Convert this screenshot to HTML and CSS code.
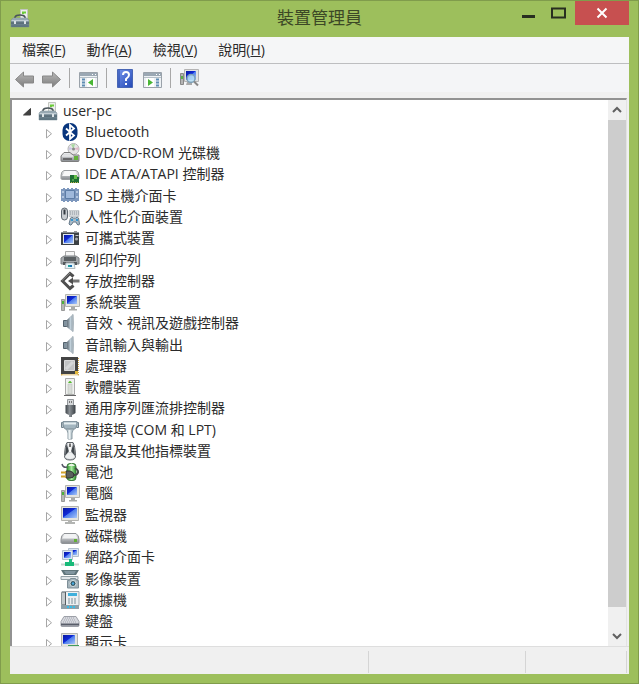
FILE: index.html
```
<!DOCTYPE html>
<html lang="zh-Hant">
<head>
<meta charset="utf-8">
<meta name="viewport" content="width=device-width, initial-scale=1">
<title>裝置管理員</title>
<link rel="stylesheet" href="styles.css">
</head>
<body>
<svg class="sprite" aria-hidden="true">
  <defs>
    <linearGradient id="metal" x1="0" y1="0" x2="0" y2="1"><stop offset="0" stop-color="#f4f5f6"/><stop offset="1" stop-color="#85898e"/></linearGradient>
    <linearGradient id="steel" x1="0" y1="0" x2="0" y2="1"><stop offset="0" stop-color="#a4b4bd"/><stop offset="1" stop-color="#536b78"/></linearGradient>
    <linearGradient id="screen" x1="0" y1="0" x2="1" y2="1"><stop offset="0" stop-color="#0719a0"/><stop offset=".45" stop-color="#1029d8"/><stop offset=".5" stop-color="#4d7cec"/><stop offset="1" stop-color="#a9c8fa"/></linearGradient>
    <linearGradient id="arrow" x1="0" y1="0" x2="0" y2="1"><stop offset="0" stop-color="#b9b9b9"/><stop offset="1" stop-color="#7c7c7c"/></linearGradient>
    <linearGradient id="help" x1="0" y1="0" x2="1" y2="1"><stop offset="0" stop-color="#7595ed"/><stop offset="1" stop-color="#2348b5"/></linearGradient>
    <linearGradient id="cone" x1="0" y1="0" x2="1" y2="0"><stop offset="0" stop-color="#56636d"/><stop offset=".6" stop-color="#c3d2dc"/><stop offset="1" stop-color="#82919b"/></linearGradient>
    <linearGradient id="cell" x1="0" y1="0" x2="1" y2="0"><stop offset="0" stop-color="#2d8f2d"/><stop offset=".5" stop-color="#a9eba0"/><stop offset="1" stop-color="#278a2a"/></linearGradient>
    <linearGradient id="plug" x1="0" y1="0" x2="1" y2="0"><stop offset="0" stop-color="#3f454a"/><stop offset=".4" stop-color="#8a9095"/><stop offset="1" stop-color="#3a4045"/></linearGradient>
  </defs>
  <symbol id="open" viewBox="0 0 10 16"><path d="M8.500 5.500v6.500H1.500z" fill="#404040" stroke="#404040"/></symbol>
  <symbol id="closed" viewBox="0 0 10 16"><path d="M2.500 5.500v8.500l5-4.250z" fill="#fff" stroke="#a6a6a6"/></symbol>
  <symbol id="toolbox" viewBox="0 0 20 20">
    <path d="M10.500 1.500h7v10h-7z" fill="#eef0ec" stroke="#c2c6c0"/><path d="M13 6V4.500h3" fill="none" stroke="#6ccc3a" stroke-width="2"/>
    <path d="M5 11V9q1-2 5-2t5 2v2" fill="none" stroke="#4a545a" stroke-width="1.500"/>
    <path d="M1 12l2-2h14l2 2v7H1z" fill="url(#steel)" stroke="#7a8c96" stroke-width=".5"/><path d="M1.500 12.500h17" stroke="#c0ccd3"/><path d="M1 15h18" stroke="#465b67"/><path d="M4 13h2v3H4zM14 13h2v3h-2z" fill="#dce3e6"/>
  </symbol>
  <symbol id="bluetooth" viewBox="0 0 20 20"><rect x="2.500" y="1" width="15" height="18" rx="7" fill="#08357d"/><path d="M6 6.500l8 7-4 3.500v-14l4 3.500-8 7" fill="none" stroke="#fff" stroke-width="1.800"/></symbol>
  <symbol id="dvd" viewBox="0 0 20 20"><circle cx="13.500" cy="6" r="5.500" fill="#e6e6e6" stroke="#b4b4b4"/><path d="M13.500 6L11 1.500l4-.5z" fill="#a9d9a0"/><path d="M13.500 6l5-2v3z" fill="#e2b7ca"/><path d="M13.500 6l-5 1 1-3z" fill="#c9c6e3"/><circle cx="13.500" cy="6" r="1.500" fill="#8a8a8a"/><path d="M4 9.500h6l3 2.500h6v5.500q0 1-1 1H2q-1 0-1-1V13z" fill="url(#metal)" stroke="#7d7d7d"/><path d="M2 13h11" stroke="#f4f4f4"/><path d="M3 16h9" stroke="#555" stroke-width="1.500"/><path d="M14 13h4v4h-4z" fill="#65b23b"/></symbol>
  <symbol id="ide" viewBox="0 0 20 20"><path d="M4 6.500h12q3 1 3 5v3q0 1-2 1H3q-2 0-2-1v-3q0-4 3-5z" fill="url(#metal)" stroke="#9a9da0"/><path d="M5 7h10l3 5H2z" fill="#f7f7f8"/><path d="M10 11h4v2h5v6h-9z" fill="#1f7034"/><path d="M14 11h3v4h-3z" fill="#63bd48"/><path d="M12 15h2v2h-2z" fill="#4fa04b"/><path d="M11 18.500h8" stroke="#c3b350" stroke-dasharray="1 1"/></symbol>
  <symbol id="sd" viewBox="0 0 20 20"><path d="M1 3h2V2h2v1h2V2h2v1h2V2h2v1h2V2h2v1h2v12h-2v1h-2v-1h-2v1h-2v-1H9v1H7v-1H5v1H3v-1H1z" fill="#7d97bd"/><path d="M5.500 4.500h9v8h-9z" fill="#9fb8db" stroke="#5d7ca6"/><path d="M2 5h2v2H2zM2 10h2v2H2zM16 5h2v2h-2zM16 10h2v2h-2z" fill="#b3c6e0"/></symbol>
  <symbol id="hid" viewBox="0 0 20 20"><path d="M9 3.500h10v6H9z" fill="#d3d7da" stroke="#a8aeb3" stroke-width=".5"/><path d="M10 5h9M10 7h9" stroke="#8d969f" stroke-dasharray="1 1"/><rect x="1.500" y="1" width="6" height="12" rx="3" fill="#c9cdd1" stroke="#5e6770"/><path d="M4.500 2.500v5" stroke="#343b42" stroke-width="2"/><path d="M9 17l1.500-6q1-1.500 3 0h2q2-1.500 3 0L19.500 17q-1.500 3-3.500-2h-3q-2 5-4 2z" fill="#a9bcc9" stroke="#66798a"/><path d="M11 13h2m3 0h2" stroke="#3596cf" stroke-width="2"/></symbol>
  <symbol id="portable" viewBox="0 0 20 20"><path d="M3 3.500h4M14 3.500h3" stroke="#999"/><path d="M1 4h18v13H1z" fill="#3c4145"/><path d="M1 4.500h18" stroke="#888e93"/><path d="M3 6h11v10H3z" fill="#dfe6f0"/><path d="M4 7h9v8H4z" fill="url(#screen)"/><path d="M15.500 7.500h3" stroke="#c7cacc"/><circle cx="16.500" cy="11" r="1.500" fill="#a7aaae"/></symbol>
  <symbol id="printer" viewBox="0 0 20 20"><path d="M5.500 1.500h9v7h-9z" fill="#f6f6f6" stroke="#aaa"/><path d="M1 8l3-2h12l3 2v6H1z" fill="#a4a8ab" stroke="#7d8184"/><path d="M4 7h12v4H4z" fill="#5b6063"/><path d="M3 12h14v3H3z" fill="#54595c"/><path d="M6 13h8l1 5.500H5z" fill="#e4f3f7" stroke="#b5bcc0"/><path d="M8 15h2v2H8z" fill="#229e9f"/><path d="M10 15h2v2h-2z" fill="#1870b0"/></symbol>
  <symbol id="storage" viewBox="0 0 20 20"><path d="M13.500 5.500L10 2.500 2.500 10l7.500 7.500 3.500-3" fill="none" stroke="#4e4e4e" stroke-width="3"/><path d="M2 9.500L10 2" stroke="#8a8a8a"/><path d="M12 10h7.500" stroke="#757575" stroke-width="3"/><path d="M13 6.500v7L8 10z" fill="#4e4e4e"/></symbol>
  <symbol id="computer" viewBox="0 0 20 20"><path d="M5.500 2.500h14v12h-14z" fill="#e4e4e0" stroke="#b4b4b0"/><path d="M7 4h10v8H7z" fill="url(#screen)"/><path d="M11 15h4v2h2v1.500H9V17h2z" fill="#a9aba9"/><path d="M1.500 7.500h3v11h-3z" fill="#b5b7b4" stroke="#999"/><path d="M2 9h2v3H2z" fill="#4db03a"/></symbol>
  <symbol id="speaker" viewBox="0 0 20 20"><path d="M3.500 7.500h4v6h-4z" fill="#82939f" stroke="#54626d"/><path d="M7 7l6-5.500v17L7 14z" fill="url(#cone)" stroke="#94a1aa" stroke-width=".5"/><path d="M12 1.500h1.500q1 8.500 0 17H12z" fill="#aab6be"/></symbol>
  <symbol id="cpu" viewBox="0 0 20 20"><path d="M2 2h16v16.500H2z" fill="none" stroke="#d2a84c" stroke-width="2" stroke-dasharray="1 1"/><path d="M1 1h17v17H1z" fill="#444"/><path d="M4.500 4.500h10v10h-10z" fill="#c2c3c4" stroke="#dadada"/><path d="M6 13l7-7" stroke="#d6d7d8" stroke-width="3"/><path d="M15 15h3v3h-3z" fill="#e3b83b"/></symbol>
  <symbol id="software" viewBox="0 0 20 20"><path d="M5.500 1.500h9v16h-9z" fill="#f0f1ef" stroke="#aaa"/><path d="M8 7h4v10H8z" fill="#d9dcd8" stroke="#b2b8b0" stroke-width=".5"/><path d="M8 6q2-4 4 0z" fill="#54b92f"/><path d="M4 18.500h12" stroke="#666"/></symbol>
  <symbol id="usb" viewBox="0 0 20 20"><path d="M7.500 1.500h6v6h-6z" fill="#d5d8da" stroke="#94989c"/><path d="M9 3h1v2H9zM11 3h1v2h-1z" fill="#777"/><path d="M5.500 7h10v8q-1 1-3.500 2v2H9v-2q-2.500-1-3.500-2z" fill="url(#plug)"/></symbol>
  <symbol id="port" viewBox="0 0 20 20"><path d="M1.500 2.500h2v5h-2zM16.500 2.500h2v5h-2z" fill="#b7c3ca" stroke="#71828c"/><path d="M3 1.500h14V5l-2 4H5L3 5z" fill="#a3b5bf" stroke="#84949e"/><path d="M4 3.500h12" stroke="#e5edef" stroke-width="2"/><path d="M6.500 9h7l-1.500 4v6H8v-6z" fill="#b7c5cc" stroke="#8b9aa2"/><path d="M9.500 10v9" stroke="#edf3f4" stroke-width="2"/></symbol>
  <symbol id="mouse" viewBox="0 0 20 20"><path d="M7 1.500h6q2 3 2.500 13Q16 19 10 19t-5.500-4.500Q5 4.500 7 1.500z" fill="#c5c9cd" stroke="#5d6267"/><path d="M6.500 3L9 10l-4 5zM13.500 3L11 10l4 5z" fill="#40464b"/><path d="M8 2h4l-1 9H9z" fill="#fafafa"/><path d="M10 2.500V6" stroke="#444" stroke-width="1.500"/><path d="M5 16q5-9 10 0-5 4-10 0" fill="#eef0f1"/></symbol>
  <symbol id="battery" viewBox="0 0 20 20"><rect x="7" y="1.500" width="9" height="17" rx="3" fill="url(#cell)" stroke="#3d7d3d"/><path d="M8 4q3.500-5 7 0z" fill="#e9f5e4"/><path d="M2 2q1 4 5 3" fill="none" stroke="#556" stroke-width="1.500"/><path d="M15 6q5 3 2 6-2 2-5 0" fill="none" stroke="#454b49" stroke-width="2"/><path d="M6 9h4q4 1 4 4t-4 3H6z" fill="#5a605d" stroke="#303432"/><path d="M1 10.500h5M1 14.500h5" stroke="#d1a32c" stroke-width="2"/></symbol>
  <symbol id="monitor" viewBox="0 0 20 20"><path d="M1.500 1.500h17v14h-17z" fill="#e4e4df" stroke="#b4b4b0"/><path d="M3 3h14v10H3z" fill="url(#screen)"/><path d="M8 16h4v1h3v2H5v-2h3z" fill="#b3b5b3"/></symbol>
  <symbol id="disk" viewBox="0 0 20 20"><path d="M4 7.500h12q3 2 3 6v3q0 1-2 1H3q-2 0-2-1v-3q0-4 3-6z" fill="url(#metal)" stroke="#909396"/><path d="M5 8h10l3 4.500H2z" fill="#f2f3f4"/><path d="M3 15.500h10" stroke="#9a9da0"/><path d="M14 13h3v3h-3z" fill="#62b035"/></symbol>
  <symbol id="network" viewBox="0 0 20 20"><path d="M8.500 1.500h10v8h-10z" fill="#dbe6f2" stroke="#b3bfcc"/><path d="M10 3h7v5h-7z" fill="url(#screen)"/><path d="M2.500 3.500h10v9h-10z" fill="#dbe6f2" stroke="#b3bfcc"/><path d="M4 5h7v6H4z" fill="url(#screen)"/><path d="M9 12h3v4H9z" fill="#22be83"/><path d="M1 17.500h18" stroke="#c9d3cf" stroke-width="2"/><path d="M5 15h9v4H5z" fill="#18ba79"/></symbol>
  <symbol id="imaging" viewBox="0 0 20 20"><path d="M1 1h18l-3 5H4z" fill="#5f747a"/><path d="M4 2h12l-2 3H6z" fill="#8296a0"/><path d="M1 7.500h17v3H1z" fill="#e0e5e8" stroke="#93a0a6"/><path d="M7.500 11.500h2l1-2h5l1 2h2v7.500h-11z" fill="#a5b4bb" stroke="#7e8f98"/><circle cx="13" cy="14.500" r="3" fill="#33535f" stroke="#dbe6ea"/><circle cx="13" cy="14.500" r="1.200" fill="#4aaee5"/></symbol>
  <symbol id="modem" viewBox="0 0 20 20"><path d="M2 1.500h17v14H2z" fill="#eceff1" stroke="#a3abb0"/><path d="M1.500 2.500h4v12h-4z" fill="#c4cacd" stroke="#8d9599"/><path d="M5.500 2v13" stroke="#555d61"/><path d="M8 3h9v3H8z" fill="#3fb0dc"/><path d="M8 9h9M8 11h9M8 13h9" stroke="#7d909a" stroke-dasharray="2 1"/><path d="M1 15h18v4H1z" fill="#8fa0a9"/><path d="M7 17h8" stroke="#38bbe6" stroke-width="2" stroke-dasharray="2 1"/></symbol>
  <symbol id="keyboard" viewBox="0 0 20 20"><path d="M4 5.500h12l3 5v4q0 1-1 1H2q-1 0-1-1v-4z" fill="#d6d8de" stroke="#9da0a8"/><path d="M5 7h10M4 9h12M3 11h14" stroke="#a3a6af" stroke-dasharray="1 1"/><path d="M1 12.500h18v2H1z" fill="#585d69"/></symbol>
  <symbol id="display" viewBox="0 0 20 20"><path d="M1.500 1.500h16v13h-16z" fill="#e2e3df" stroke="#b4b4b0"/><path d="M3 3h12v9H3z" fill="url(#screen)"/><path d="M8 13h11v5H8z" fill="#429b5b"/><path d="M11 14h4v3h-4z" fill="#d7e7da"/></symbol>
  <symbol id="pane-frame" viewBox="0 0 20 20"><path d="M.5 2.500h18v15H.5z" fill="#edf1f4" stroke="#9aa2aa"/><path d="M1 3h17v3H1z" fill="#9ba8b4"/><path d="M13 4.500h1m2 0h1" stroke="#fff"/><path d="M1 7.500h17" stroke="#b6c0c8"/></symbol>
</svg>

<main class="window">
  <header class="titlebar">
    <svg class="icon app-icon" aria-hidden="true"><use href="#toolbox"/></svg>
    <h1>裝置管理員</h1>
    <div class="window-buttons">
      <button class="minimize" aria-label="最小化"><svg width="14" height="18" aria-hidden="true"><path d="M1 15.500h13" stroke="#282e20" stroke-width="3"/></svg></button>
      <button class="maximize" aria-label="最大化"><svg width="16" height="18" aria-hidden="true"><path d="M1 7.500h13v9H1z" fill="none" stroke="#282e20" stroke-width="2"/></svg></button>
      <button class="close" aria-label="關閉"><svg width="12" height="12" aria-hidden="true"><path d="M1.500 1.500l9 9m0-9l-9 9" stroke="#fff" stroke-width="2"/></svg></button>
    </div>
  </header>

  <div class="client">
    <nav class="menubar">
      <button>檔案(<u>F</u>)</button>
      <button>動作(<u>A</u>)</button>
      <button>檢視(<u>V</u>)</button>
      <button>說明(<u>H</u>)</button>
    </nav>
    <div class="toolbar" role="toolbar" aria-label="工具列">
      <button aria-label="上一頁"><svg class="icon" viewBox="0 0 20 20" aria-hidden="true"><path d="M.5 11.500l8-7.500v4h10v7h-10v4z" fill="url(#arrow)" stroke="#888"/></svg></button>
      <button class="spaced" aria-label="下一頁"><svg class="icon" viewBox="0 0 20 20" aria-hidden="true"><path d="M18.500 11.500l-8-7.500v4h-10v7h10v4z" fill="url(#arrow)" stroke="#888"/></svg></button>
      <span class="separator"></span>
      <button aria-label="顯示主控台樹狀目錄"><svg class="icon" viewBox="0 -2 20 20" aria-hidden="true"><use href="#pane-frame" width="20" height="20"/><path d="M3 9.500h3m-3 3h3m-3 3h3" stroke="#5f8db3" stroke-width="2"/><path d="M8 8h8v9H8z" fill="#fff"/><path d="M14 9v7l-5-3.500z" fill="#49b635"/></svg></button>
      <span class="separator"></span>
      <button aria-label="說明"><svg class="icon" viewBox="0 0 20 20" aria-hidden="true"><path d="M1.500 1.500h15v18h-15z" fill="url(#help)" stroke="#4866b5"/><path d="M3 2v17" stroke="#294ba8"/><path d="M7 7q0-3 3-3t3 3q0 2-3 4v2" fill="none" stroke="#fff" stroke-width="2"/><path d="M9 15h2v2H9z" fill="#fff"/></svg></button>
      <button class="spaced" aria-label="顯示動作窗格"><svg class="icon" viewBox="0 -2 20 20" aria-hidden="true"><use href="#pane-frame" width="20" height="20"/><path d="M13 9.500h3m-3 3h3m-3 3h3" stroke="#5f8db3" stroke-width="2"/><path d="M3 8h8v9H3z" fill="#fff"/><path d="M5 9v7l5-3.500z" fill="#49b635"/></svg></button>
      <span class="separator"></span>
      <button aria-label="掃描硬體變更"><svg class="icon" viewBox="0 0 20 20" aria-hidden="true"><path d="M4.500 1.500h14v12h-14z" fill="#e2e3e3" stroke="#b4b4b4"/><path d="M6 3h10v9H6z" fill="url(#screen)"/><path d="M.5 5.500h3v11h-3z" fill="#b5b5b5" stroke="#888"/><path d="M1 8h2v3H1z" fill="#57af45"/><path d="M7 14h5v3H6z" fill="#aaa"/><circle cx="11" cy="10.500" r="4" fill="#b6e0f7" fill-opacity=".8" stroke="#7da0b8" stroke-width="1.500"/><path d="M14 13.500l4 4" stroke="#888" stroke-width="2"/></svg></button>
    </div>

    <section class="tree-panel" aria-label="裝置">
      <ul class="tree">
        <li class="root"><button aria-label="收合"><svg aria-hidden="true"><use href="#open"/></svg></button><svg class="icon" aria-hidden="true"><use href="#toolbox"/></svg><span>user-pc</span></li>
        <li><button aria-label="展開"><svg aria-hidden="true"><use href="#closed"/></svg></button><svg class="icon" aria-hidden="true"><use href="#bluetooth"/></svg><span>Bluetooth</span></li>
        <li><button aria-label="展開"><svg aria-hidden="true"><use href="#closed"/></svg></button><svg class="icon" aria-hidden="true"><use href="#dvd"/></svg><span>DVD/CD-ROM 光碟機</span></li>
        <li><button aria-label="展開"><svg aria-hidden="true"><use href="#closed"/></svg></button><svg class="icon" aria-hidden="true"><use href="#ide"/></svg><span>IDE ATA/ATAPI 控制器</span></li>
        <li><button aria-label="展開"><svg aria-hidden="true"><use href="#closed"/></svg></button><svg class="icon" aria-hidden="true"><use href="#sd"/></svg><span>SD 主機介面卡</span></li>
        <li><button aria-label="展開"><svg aria-hidden="true"><use href="#closed"/></svg></button><svg class="icon" aria-hidden="true"><use href="#hid"/></svg><span>人性化介面裝置</span></li>
        <li><button aria-label="展開"><svg aria-hidden="true"><use href="#closed"/></svg></button><svg class="icon" aria-hidden="true"><use href="#portable"/></svg><span>可攜式裝置</span></li>
        <li><button aria-label="展開"><svg aria-hidden="true"><use href="#closed"/></svg></button><svg class="icon" aria-hidden="true"><use href="#printer"/></svg><span>列印佇列</span></li>
        <li><button aria-label="展開"><svg aria-hidden="true"><use href="#closed"/></svg></button><svg class="icon" aria-hidden="true"><use href="#storage"/></svg><span>存放控制器</span></li>
        <li><button aria-label="展開"><svg aria-hidden="true"><use href="#closed"/></svg></button><svg class="icon" aria-hidden="true"><use href="#computer"/></svg><span>系統裝置</span></li>
        <li><button aria-label="展開"><svg aria-hidden="true"><use href="#closed"/></svg></button><svg class="icon" aria-hidden="true"><use href="#speaker"/></svg><span>音效、視訊及遊戲控制器</span></li>
        <li><button aria-label="展開"><svg aria-hidden="true"><use href="#closed"/></svg></button><svg class="icon" aria-hidden="true"><use href="#speaker"/></svg><span>音訊輸入與輸出</span></li>
        <li><button aria-label="展開"><svg aria-hidden="true"><use href="#closed"/></svg></button><svg class="icon" aria-hidden="true"><use href="#cpu"/></svg><span>處理器</span></li>
        <li><button aria-label="展開"><svg aria-hidden="true"><use href="#closed"/></svg></button><svg class="icon" aria-hidden="true"><use href="#software"/></svg><span>軟體裝置</span></li>
        <li><button aria-label="展開"><svg aria-hidden="true"><use href="#closed"/></svg></button><svg class="icon" aria-hidden="true"><use href="#usb"/></svg><span>通用序列匯流排控制器</span></li>
        <li><button aria-label="展開"><svg aria-hidden="true"><use href="#closed"/></svg></button><svg class="icon" aria-hidden="true"><use href="#port"/></svg><span>連接埠 (COM 和 LPT)</span></li>
        <li><button aria-label="展開"><svg aria-hidden="true"><use href="#closed"/></svg></button><svg class="icon" aria-hidden="true"><use href="#mouse"/></svg><span>滑鼠及其他指標裝置</span></li>
        <li><button aria-label="展開"><svg aria-hidden="true"><use href="#closed"/></svg></button><svg class="icon" aria-hidden="true"><use href="#battery"/></svg><span>電池</span></li>
        <li><button aria-label="展開"><svg aria-hidden="true"><use href="#closed"/></svg></button><svg class="icon" aria-hidden="true"><use href="#computer"/></svg><span>電腦</span></li>
        <li><button aria-label="展開"><svg aria-hidden="true"><use href="#closed"/></svg></button><svg class="icon" aria-hidden="true"><use href="#monitor"/></svg><span>監視器</span></li>
        <li><button aria-label="展開"><svg aria-hidden="true"><use href="#closed"/></svg></button><svg class="icon" aria-hidden="true"><use href="#disk"/></svg><span>磁碟機</span></li>
        <li><button aria-label="展開"><svg aria-hidden="true"><use href="#closed"/></svg></button><svg class="icon" aria-hidden="true"><use href="#network"/></svg><span>網路介面卡</span></li>
        <li><button aria-label="展開"><svg aria-hidden="true"><use href="#closed"/></svg></button><svg class="icon" aria-hidden="true"><use href="#imaging"/></svg><span>影像裝置</span></li>
        <li><button aria-label="展開"><svg aria-hidden="true"><use href="#closed"/></svg></button><svg class="icon" aria-hidden="true"><use href="#modem"/></svg><span>數據機</span></li>
        <li><button aria-label="展開"><svg aria-hidden="true"><use href="#closed"/></svg></button><svg class="icon" aria-hidden="true"><use href="#keyboard"/></svg><span>鍵盤</span></li>
        <li><button aria-label="展開"><svg aria-hidden="true"><use href="#closed"/></svg></button><svg class="icon" aria-hidden="true"><use href="#display"/></svg><span>顯示卡</span></li>
      </ul>
      <div class="scrollbar">
        <button aria-label="向上捲動"><svg width="10" height="8" aria-hidden="true"><path d="M1 6l4-4 4 4" fill="none" stroke="#606060" stroke-width="2"/></svg></button>
        <div class="track"><div class="thumb"></div></div>
        <button aria-label="向下捲動"><svg width="10" height="8" aria-hidden="true"><path d="M1 2l4 4 4-4" fill="none" stroke="#606060" stroke-width="2"/></svg></button>
      </div>
    </section>
    <footer class="statusbar"><span></span><span></span><span></span></footer>
  </div>
</main>
</body>
</html>
```
FILE: styles.css
```
* { box-sizing: border-box; }

body {
  margin: 0;
  background: #fff;
  color: #2a2a2a;
  font: 14px/20px "Open Sans", "Noto Sans CJK TC", sans-serif;
}

button {
  display: flex;
  align-items: center;
  justify-content: center;
  flex: none;
  padding: 0;
  border: 0;
  background: none;
  color: inherit;
  font: inherit;
}

svg { display: block; flex: none; }
.sprite { position: absolute; width: 0; height: 0; }
.icon { width: 20px; height: 20px; }

.window {
  display: flex;
  flex-direction: column;
  height: calc(100vh - 1px);
  margin-right: 1px;
  padding: 0 9px 9px;
  border: 1px solid #809c4c;
  background: #9dbf5c;
}

.titlebar {
  display: grid;
  grid-template-columns: 1fr auto 1fr;
  flex: none;
  height: 36px;
}

.app-icon { margin-top: 7px; }

h1 {
  margin: 4px 0 0;
  color: #3c4826;
  font: 17px/24px "Noto Sans CJK TC", sans-serif;
}

.window-buttons {
  display: flex;
  align-items: flex-start;
  justify-content: flex-end;
}

.minimize { margin-right: 16px; }
.maximize { margin-right: 8px; }

.close {
  width: 54px;
  height: 24px;
  background: #c75050;
}

.client {
  display: flex;
  flex: 1;
  flex-direction: column;
  min-height: 0;
  background: #f0f0f0;
}

.menubar {
  display: flex;
  flex: none;
  gap: 21px;
  height: 27px;
  padding-left: 12px;
  border-bottom: 1px solid #bdbec0;
  background: #f5f6f7;
}

.toolbar {
  display: flex;
  align-items: center;
  flex: none;
  height: 28px;
  margin-bottom: 6px;
  padding-left: 5px;
  background: #f4f5f7;
}

.spaced { margin-left: 7px; }

.separator {
  flex: none;
  width: 1px;
  height: 20px;
  margin: 0 9px 0 7px;
  background: #a8a8a8;
}

.tree-panel {
  display: flex;
  flex: 1;
  min-height: 0;
  margin-right: 2px;
  border: solid #929292;
  border-width: 2px 1px 0 2px;
  border-right-color: #e3e3e3;
  background: #fff;
  overflow: hidden;
}

.tree {
  display: grid;
  flex: 1;
  grid-auto-rows: 1fr;
  height: 553px;
  margin: 0;
  padding: 0;
  list-style: none;
}

.tree li {
  display: flex;
  align-items: center;
  padding-left: 32px;
  white-space: nowrap;
}

.tree .root { padding-left: 10px; }
.tree button svg { width: 10px; height: 16px; }
.tree .icon { margin: 0 5px 0 6px; }

.scrollbar {
  display: flex;
  flex: none;
  flex-direction: column;
  width: 18px;
  background: #f0f0f0;
}

.scrollbar button { height: 20px; }
.track { flex: 1; padding-bottom: 19px; }
.thumb { height: 100%; background: #cdcdcd; }

.statusbar {
  display: grid;
  flex: none;
  grid-template-columns: 359fr 157fr 101fr;
  height: 28px;
  padding: 4px 2px 1px 0;
  border-top: 1px solid #dedede;
}

.statusbar span { border-right: 1px solid #d5d5d5; }
```
